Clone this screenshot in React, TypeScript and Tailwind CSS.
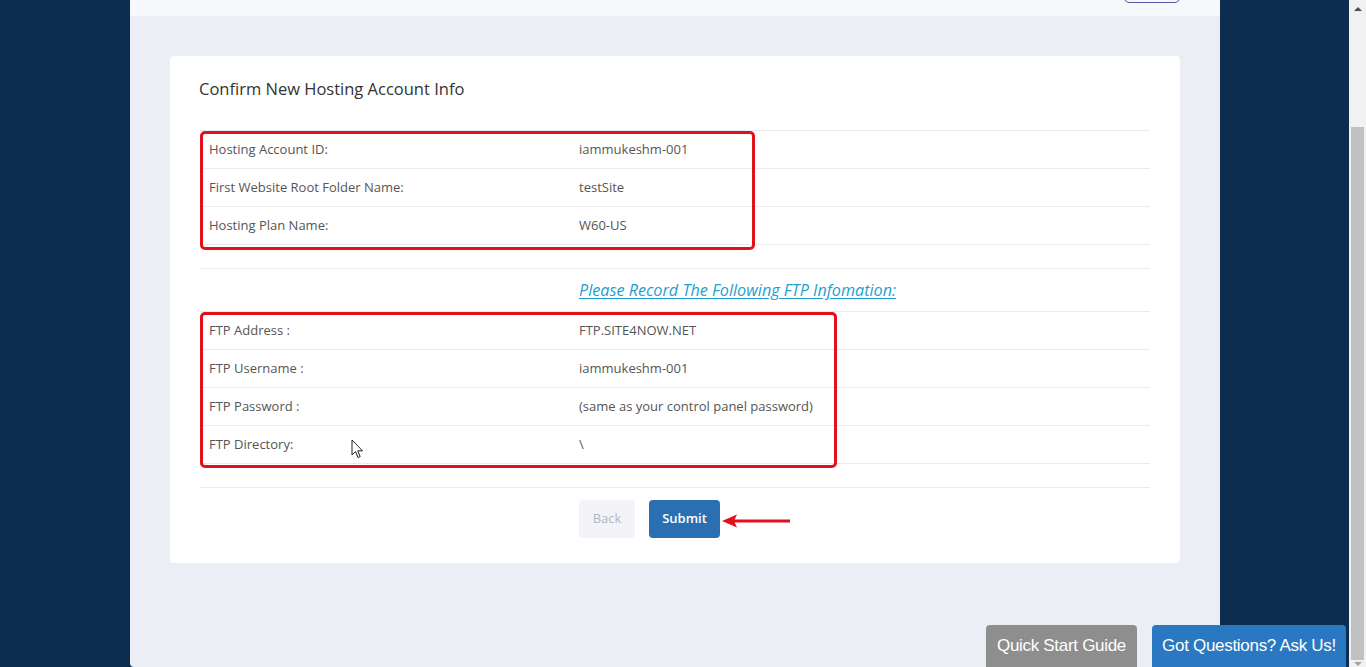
import React from 'react'

const font = { fontFamily: '"Open Sans", "Liberation Sans", sans-serif' }

const accountRows = [
  ['Hosting Account ID:', 'iammukeshm-001'],
  ['First Website Root Folder Name:', 'testSite'],
  ['Hosting Plan Name:', 'W60-US'],
]

const ftpRows = [
  ['FTP Address :', 'FTP.SITE4NOW.NET'],
  ['FTP Username :', 'iammukeshm-001'],
  ['FTP Password :', '(same as your control panel password)'],
  ['FTP Directory:', '\\'],
]

function Row({ label, value }: { label: string; value: string }) {
  return (
    <div className="flex h-[38px] items-center border-t border-[#e9ebee] text-[13px] text-[#555]">
      <div className="w-[370px] pl-[10px]">{label}</div>
      <div className="pl-[10px]">{value}</div>
    </div>
  )
}

export default function App() {
  return (
    <div className="relative flex h-[667px] w-[1366px] overflow-hidden bg-[#0c2d4f]" style={font}>
      <div className="w-[130px] shrink-0" />
      <div className="flex w-[1090px] shrink-0 flex-col rounded-bl-[4px] bg-[#ebeef5]">
        <div className="relative h-[16px] bg-[#f7f8fb]">
          <div className="absolute right-[40px] top-[-10px] h-[13px] w-[56px] rounded-[5px] border border-[#5e52a3]" />
        </div>
        <div className="px-[40px] pt-[40px]">
          <div className="relative rounded-[4px] bg-white px-[29px] pb-[25px] pt-[22px]">
            <h2 className="mb-[30px] text-[16.5px] leading-[22px] text-[#333]">Confirm New Hosting Account Info</h2>

            <div className="w-[951px]">
              {accountRows.map(([l, v]) => (
                <Row key={l} label={l} value={v} />
              ))}
              <div className="h-[24px] border-t border-[#e9ebee]" />
              <div className="flex h-[43px] items-center border-t border-[#e9ebee]">
                <div className="w-[370px]" />
                <a className="pl-[10px] text-[16.2px] italic text-[#1f9fcd] underline underline-offset-2">
                  Please Record The Following FTP Infomation:
                </a>
              </div>
              {ftpRows.map(([l, v]) => (
                <Row key={l} label={l} value={v} />
              ))}
              <div className="h-[24px] border-t border-[#e9ebee]" />
              <div className="border-t border-[#e9ebee] pt-[12px]">
                <div className="flex gap-[14px] pl-[380px]">
                  <button className="h-[38px] w-[56px] rounded-[4px] bg-[#f2f4f8] text-[13px] text-[#b3b8c0]">Back</button>
                  <button className="h-[38px] w-[71px] rounded-[4px] bg-[#2b6fb3] text-[13px] font-semibold text-white">Submit</button>
                </div>
              </div>
            </div>

            {/* annotation boxes */}
            <div className="absolute left-[30px] top-[75px] h-[119px] w-[555px] rounded-[5px] border-[3px] border-[#e0121b]" />
            <div className="absolute left-[30px] top-[256px] h-[156px] w-[637px] rounded-[5px] border-[3px] border-[#e0121b]" />
            <svg className="absolute left-[550px] top-[457px]" width="72" height="16" viewBox="0 0 72 16">
              <path d="M14 8 H70" stroke="#e0121b" strokeWidth="3" />
              <path d="M2 8 L17 1.5 L14 8 L17 14.5 Z" fill="#e0121b" />
            </svg>
            <svg className="absolute left-[181px] top-[383px]" width="13" height="20" viewBox="0 0 13 20">
              <path d="M1 1 V16 L4.5 12.5 L7 18.5 L9.2 17.6 L6.8 11.8 H11.5 Z" fill="white" stroke="#222" strokeWidth="1" strokeLinejoin="round" />
            </svg>
          </div>
        </div>
      </div>
      <div className="flex-1" />
      <div className="flex w-[17px] shrink-0 flex-col items-center bg-[#f1f1f1]">
        <div className="flex h-[17px] items-center justify-center">
          <div className="h-0 w-0 border-x-[4px] border-b-[4px] border-x-transparent border-b-[#505050]" />
        </div>
        <div className="mt-[110px] h-[533px] w-[13px] bg-[#c1c1c1]" />
        <div className="flex flex-1 items-center justify-center">
          <div className="h-0 w-0 border-x-[4px] border-t-[4px] border-x-transparent border-t-[#a3a3a3]" />
        </div>
      </div>

      <div className="absolute bottom-0 left-[986px] flex gap-[15px]" style={{ fontFamily: '"Liberation Sans", Arial, sans-serif' }}>
        <div className="flex h-[42px] w-[151px] items-center justify-center rounded-t-[4px] bg-[#8e8e8e] text-[17px] tracking-[-0.3px] text-white">
          Quick Start Guide
        </div>
        <div className="flex h-[42px] w-[194px] items-center justify-center rounded-t-[4px] bg-[#2a78c2] text-[17px] tracking-[-0.3px] text-white">
          Got Questions? Ask Us!
        </div>
      </div>
    </div>
  )
}
